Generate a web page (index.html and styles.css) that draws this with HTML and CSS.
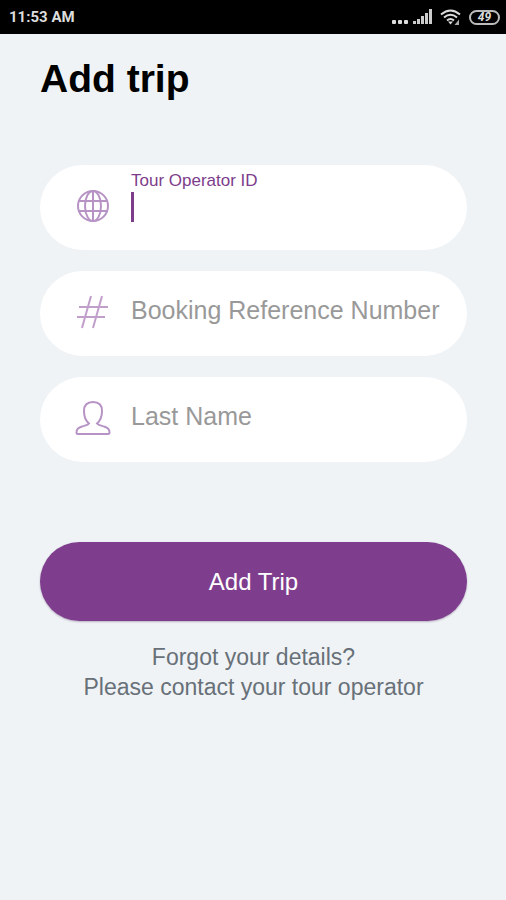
FILE: index.html
```html
<!DOCTYPE html>
<html lang="en">
<head>
<meta charset="utf-8">
<meta name="viewport" content="width=device-width, initial-scale=1">
<title>Add trip</title>
<link rel="stylesheet" href="styles.css">
</head>
<body>
<header class="status">
  <span class="time">11:53 AM</span>
  <div class="indicators">
    <svg width="18" height="18" viewBox="0 0 18 18" fill="#ddd" aria-hidden="true"><rect x="1" y="12" width="4" height="4" rx="1"/><rect x="7" y="12" width="4" height="4" rx="1"/><rect x="13" y="12" width="4" height="4" rx="1"/></svg>
    <svg width="20" height="18" viewBox="0 0 20 18" fill="#ccc" aria-hidden="true"><rect x="0" y="13" width="3" height="3"/><rect x="4" y="11" width="3" height="5"/><rect x="8" y="8" width="3" height="8"/><rect x="12" y="5" width="3" height="11"/><rect x="16" y="1" width="3" height="15"/></svg>
    <svg class="wifi" width="22" height="18" viewBox="0 0 22 18" fill="none" stroke="#ddd" stroke-width="2" aria-hidden="true"><path d="M1 6.500Q10.500-1.500 20 6.500M4 9.500Q10.500 4 17 9.500M7 12.500Q10.500 9.500 14 12.500"/><path d="M8 13.500L10.500 16.500L13 13.500Z" fill="#ddd" stroke="none"/><path d="M19 11.500V17H14.500Z" fill="#aaa" stroke="none"/></svg>
    <span class="battery">49</span>
  </div>
</header>
<main class="page">
  <h1>Add trip</h1>
  <form class="form">
    <div class="field">
      <svg class="icon" viewBox="0 0 36 36" aria-hidden="true"><circle cx="18" cy="18" r="15"/><ellipse cx="18" cy="18" rx="8" ry="15"/><path d="M18 3V33M4 13H32M4 23H32"/></svg>
      <div class="entry">
        <label for="operator">Tour Operator ID</label>
        <div class="line"><span class="caret"></span><input id="operator" type="text"></div>
      </div>
    </div>
    <div class="field">
      <svg class="icon hash" viewBox="0 0 36 36" aria-hidden="true"><path d="M16 2L7 34M27 2L18 34M4 13H33M2 23H30"/></svg>
      <input type="text" placeholder="Booking Reference Number" aria-label="Booking Reference Number">
    </div>
    <div class="field">
      <svg class="icon" viewBox="0 0 36 36" aria-hidden="true"><path d="M14 23.500C10.500 20.500 9 16 9 11C9 5.500 12 2 18 2S27 5.500 27 11C27 16 25.500 20.500 22 23.500C23 25 26 25.500 29 26.500C33 28 34.500 29 34.500 32.500Q34.500 34 33 34H3Q1.500 34 1.500 32.500C1.500 29 3 28 7 26.500C10 25.500 13 25 14 23.500Z"/></svg>
      <input type="text" placeholder="Last Name" aria-label="Last Name">
    </div>
    <button class="submit" type="button">Add Trip</button>
  </form>
  <p class="help">Forgot your details?<br>Please contact your tour operator</p>
</main>
</body>
</html>
```
FILE: styles.css
```css
* { box-sizing: border-box; }

body {
  margin: 0;
  min-height: 100vh;
  background: #eff3f6;
  font-family: "Liberation Sans", Arial, sans-serif;
}

.status {
  display: flex;
  align-items: center;
  justify-content: space-between;
  height: 34px;
  padding: 0 6px 0 9px;
  background: #000;
  color: #ddd;
  font-family: Roboto, sans-serif;
}

.time {
  font-size: 15px;
  font-weight: 700;
}

.indicators {
  display: flex;
  align-items: center;
  gap: 4px;
}

.wifi { margin: 0 3px; }

.battery {
  width: 31px;
  height: 15px;
  border: 2px solid #bbb;
  border-radius: 8px;
  font-size: 12px;
  font-style: italic;
  font-weight: 700;
  line-height: 11px;
  text-align: center;
}

.page { padding: 20px 39px 20px 40px; }

h1 {
  margin: 0;
  color: #000;
  font-size: 39px;
  line-height: 50px;
}

.form {
  display: flex;
  flex-direction: column;
  gap: 21px;
  margin-top: 61px;
}

.field {
  display: flex;
  align-items: center;
  height: 85px;
  padding: 0 20px 4px 35px;
  border-radius: 43px;
  background: #fff;
}

.icon {
  flex: none;
  width: 36px;
  height: 36px;
  margin-right: 20px;
  fill: none;
  stroke: #b793c5;
  stroke-width: 2;
}

.hash { stroke: #c09fcb; }

.entry {
  flex: 1;
  align-self: flex-start;
  padding-top: 6px;
}

label {
  display: block;
  color: #7d3d8b;
  font-size: 17px;
  line-height: 20px;
}

.line {
  display: flex;
  margin-top: 1px;
}

.caret {
  width: 3px;
  height: 30px;
  background: #7d3d8b;
}

input {
  flex: 1;
  min-width: 0;
  height: 30px;
  margin: 0;
  padding: 0;
  border: 0;
  outline: 0;
  background: none;
  color: #333;
  font-family: inherit;
  font-size: 25px;
}

.field > input { margin-bottom: 2px; }

input::placeholder {
  color: #999;
  opacity: 1;
}

.submit {
  height: 79px;
  margin-top: 59px;
  border: 0;
  border-radius: 40px;
  background: #7f3e8d;
  box-shadow: 0 1px 2px #b9afc2;
  color: #fff;
  font-family: inherit;
  font-size: 24px;
}

.help {
  margin: 21px 0 0;
  color: #687078;
  font-size: 23px;
  line-height: 30px;
  text-align: center;
}
```
